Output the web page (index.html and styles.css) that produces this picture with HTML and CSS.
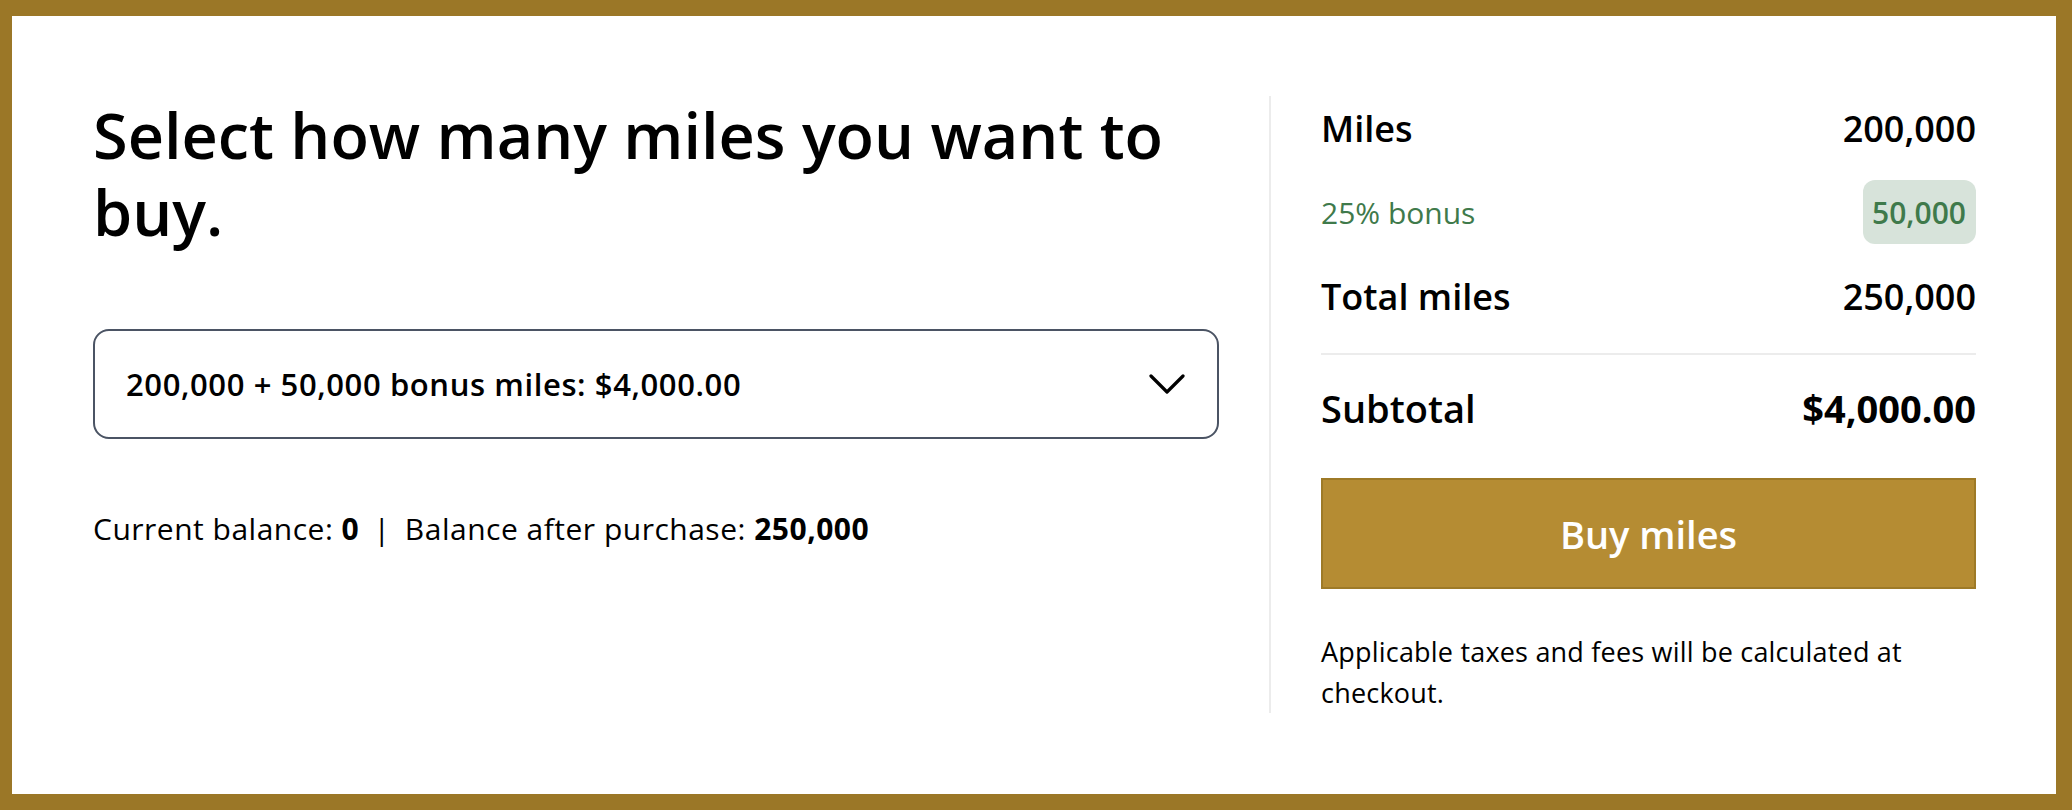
FILE: index.html
```html
<!DOCTYPE html>
<html lang="en">
<head>
    <meta charset="UTF-8">
    <meta name="viewport" content="width=device-width, initial-scale=1.0">
    <title>Buy miles</title>
    <link rel="stylesheet" href="styles.css">
</head>
<body>
    <div class="frame">
        <div class="purchase">
            <section class="picker">
                <h1 class="picker-title">Select how many miles you want to buy.</h1>

                <div class="miles-select">
                    <span class="miles-select-value">200,000 + 50,000 bonus miles: $4,000.00</span>
                    <svg class="chevron" width="36" height="22" viewBox="0 0 36 22">
                        <polyline points="2,3 18,19 34,3" fill="none" stroke="#000" stroke-width="3.2" stroke-linecap="round" stroke-linejoin="round"/>
                    </svg>
                </div>

                <p class="balance">Current balance: <strong>0</strong> <span class="sep">|</span> Balance after purchase: <strong>250,000</strong></p>
            </section>

            <aside class="summary">
                <div class="summary-row">
                    <span>Miles</span>
                    <span class="num">200,000</span>
                </div>
                <div class="summary-row bonus">
                    <span>25% bonus</span>
                    <span class="bonus-badge">50,000</span>
                </div>
                <div class="summary-row">
                    <span>Total miles</span>
                    <span class="num">250,000</span>
                </div>
                <hr class="summary-rule">
                <div class="summary-row subtotal">
                    <span>Subtotal</span>
                    <span class="num">$4,000.00</span>
                </div>
                <button class="buy-btn">Buy miles</button>
                <p class="note">Applicable taxes and fees will be calculated at checkout.</p>
            </aside>
        </div>
    </div>
</body>
</html>
```

FILE: styles.css
```css
html, body {
    margin: 0;
    padding: 0;
    background: #fff;
}
body {
    font-family: "Open Sans", "Noto Sans", Arial, sans-serif;
    color: #000;
}
.frame {
    height: 100vh;
    box-sizing: border-box;
    border: 16px solid #9b7727;
    border-left-width: 12px;
    padding: 80px 80px 80px 81px;
}
.purchase {
    display: flex;
    gap: 50px;
}
.picker {
    flex: 1;
}
.picker-title {
    margin: 0;
    font-size: 63px;
    line-height: 77px;
    font-weight: 600;
}
.miles-select {
    margin-top: 79px;
    height: 110px;
    box-sizing: border-box;
    border: 2px solid #4b5464;
    border-radius: 16px;
    padding: 0 32px 0 31px;
    display: flex;
    align-items: center;
    justify-content: space-between;
}
.miles-select-value {
    font-size: 31px;
    font-weight: 600;
    letter-spacing: 0.6px;
}
.balance {
    margin: 67px 0 0;
    font-size: 30px;
    line-height: 45px;
    letter-spacing: 0.5px;
}
.balance strong {
    font-weight: 700;
}
.balance .sep {
    margin: 0 6px;
}
.summary {
    width: 707px;
    box-sizing: border-box;
    padding-left: 50px;
    border-left: 2px solid #ececec;
}
.summary-row {
    height: 64px;
    display: flex;
    align-items: center;
    justify-content: space-between;
    font-size: 36px;
    font-weight: 600;
    margin-bottom: 20px;
}
.summary-row.bonus {
    font-size: 30px;
    font-weight: 400;
    color: #3f7a4b;
}
.bonus-badge {
    height: 64px;
    display: inline-flex;
    align-items: center;
    padding: 0 10px 0 9px;
    border-radius: 12px;
    background-color: #d7e3da;
    font-weight: 600;
}
.summary-rule {
    border: none;
    border-top: 2px solid #ececec;
    margin: 25px 0 21px;
}
.summary-row.subtotal {
    font-size: 38px;
    margin-bottom: 38px;
}
.summary-row.subtotal .num {
    font-weight: 700;
}
.buy-btn {
    display: block;
    width: 100%;
    height: 111px;
    background-color: #b58c33;
    border: 2px solid #9e7a27;
    color: #fff;
    font-family: inherit;
    font-size: 38px;
    font-weight: 600;
    cursor: pointer;
}
.note {
    margin: 42px 0 0;
    font-size: 27px;
    line-height: 41px;
    letter-spacing: 0.2px;
}
```
